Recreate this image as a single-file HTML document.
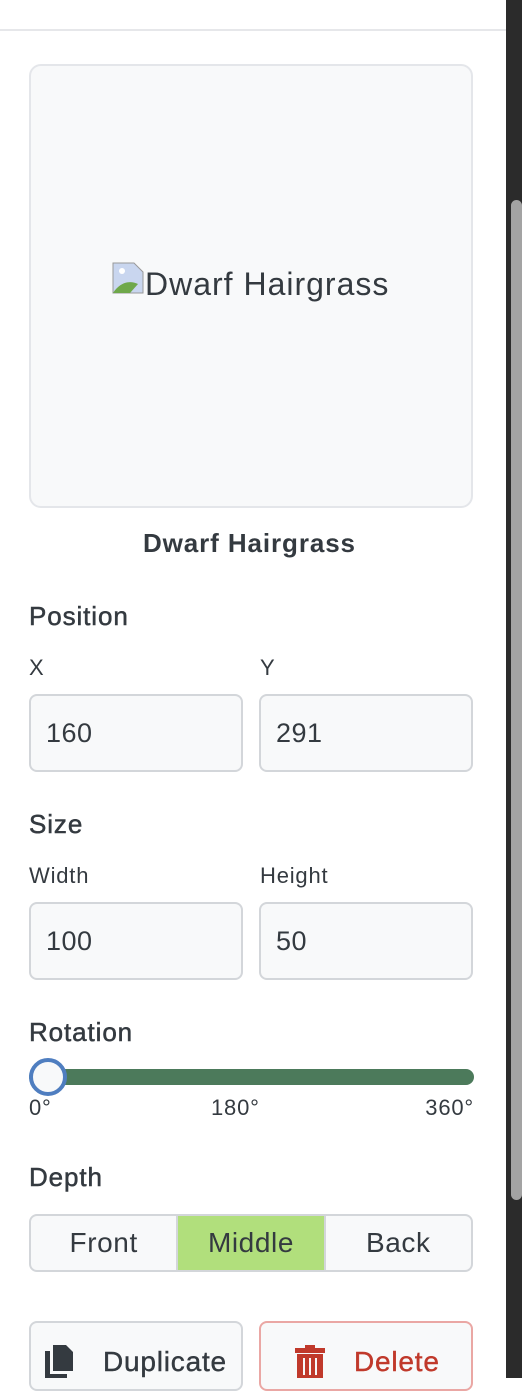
<!DOCTYPE html>
<html><head><style>
*{box-sizing:border-box;margin:0;padding:0}
body{width:522px;height:1378px;overflow:hidden;background:#fff;font-family:"Liberation Sans",sans-serif;color:#343a40;position:relative}
.a{position:absolute}
.sb{left:506px;top:0;width:16px;height:1378px;background:#2b2b2b}
.th{left:511px;top:200px;width:11px;height:1000px;background:#a3a3a3;border-radius:6px}
.card{left:29px;top:64px;width:444px;height:444px;background:#f8f9fa;border:2px solid #e4e6ea;border-radius:12px}
h3{position:absolute;font-size:26px;font-weight:normal;color:#343a40;letter-spacing:0.9px;-webkit-text-stroke:0.5px #343a40}
.lb{position:absolute;font-size:22px;color:#343a40;letter-spacing:0.8px}
.in{position:absolute;width:214px;height:78px;background:#f8f9fa;border:2px solid #d3d6da;border-radius:8px;font-size:27px;padding:22px 0 0 15px;letter-spacing:0.5px}
.seg{left:29px;top:1214px;width:444px;height:58px;border:2px solid #d3d6da;border-radius:8px;display:flex;overflow:hidden;background:#f8f9fa}
.seg div{flex:1;text-align:center;font-size:28px;line-height:54px;letter-spacing:0.6px}
.btn{position:absolute;top:1321px;width:214px;height:70px;border:2px solid #d3d6da;border-radius:8px;background:#f8f9fa;font-size:28px;letter-spacing:0.8px;-webkit-text-stroke:0.4px}
</style></head><body>
<div class="a" style="left:0;top:29px;width:506px;height:2px;background:#e6e7ea"></div>
<div class="a card"></div>
<div class="a" style="left:112px;top:262px;width:32px;height:32px">
<svg width="32" height="32"><path d="M1 1H22L31 10V31H1Z" fill="#c9d6ef" stroke="#999"/><path d="M1 31C8 20 18 18 26 22L18 31Z" fill="#6fa84a"/><circle cx="10" cy="9" r="3" fill="#fff"/></svg></div>
<div class="a" style="left:145px;top:266px;font-size:32px;color:#343a40;letter-spacing:1px">Dwarf Hairgrass</div>
<div class="a" style="left:143px;top:528px;font-size:26px;font-weight:bold;color:#343a40;letter-spacing:0.9px">Dwarf Hairgrass</div>
<h3 style="left:29px;top:601px">Position</h3>
<div class="lb" style="left:29px;top:655px">X</div>
<div class="lb" style="left:260px;top:655px">Y</div>
<div class="in" style="left:29px;top:694px">160</div>
<div class="in" style="left:259px;top:694px">291</div>
<h3 style="left:29px;top:809px">Size</h3>
<div class="lb" style="left:29px;top:863px">Width</div>
<div class="lb" style="left:260px;top:863px">Height</div>
<div class="in" style="left:29px;top:902px">100</div>
<div class="in" style="left:259px;top:902px">50</div>
<h3 style="left:29px;top:1017px">Rotation</h3>
<div class="a" style="left:29px;top:1069px;width:445px;height:16px;border-radius:8px;background:#4c7a5b"></div>
<div class="a" style="left:29px;top:1058px;width:38px;height:38px;border-radius:50%;background:#f8f9fa;border:4px solid #4f7ec0"></div>
<div class="lb" style="left:29px;top:1095px">0°</div>
<div class="lb" style="left:211px;top:1095px">180°</div>
<div class="lb" style="left:373px;width:101px;text-align:right;top:1095px">360°</div>
<h3 style="left:29px;top:1162px">Depth</h3>
<div class="a seg"><div>Front</div><div style="background:#b1df7c;border-left:2px solid #d3d6da;border-right:2px solid #d3d6da">Middle</div><div>Back</div></div>
<div class="btn" style="left:29px">
<svg class="a" style="left:14px;top:22px" width="28" height="33" viewBox="0 0 28 33"><path d="M8 0H21L28 7V26H8Z" fill="#343a40"/><path d="M0 6H5V29H22V33H0Z" fill="#343a40"/></svg>
<span class="a" style="left:72px;top:23px;color:#343a40">Duplicate</span></div>
<div class="btn" style="left:259px;border-color:#eaa7a4">
<svg class="a" style="left:34px;top:22px" width="30" height="33" viewBox="0 0 30 33"><rect x="0" y="3" width="30" height="5" fill="#c0392b"/><rect x="10" y="0" width="10" height="4" fill="#c0392b"/><path d="M2 9H28V33H2Z" fill="#c0392b"/><rect x="8" y="13" width="2" height="17" fill="#f8f9fa"/><rect x="14" y="13" width="2" height="17" fill="#f8f9fa"/><rect x="20" y="13" width="2" height="17" fill="#f8f9fa"/></svg>
<span class="a" style="left:93px;top:23px;color:#c0392b">Delete</span></div>
<div class="a sb"></div><div class="a th"></div>
</body></html>
